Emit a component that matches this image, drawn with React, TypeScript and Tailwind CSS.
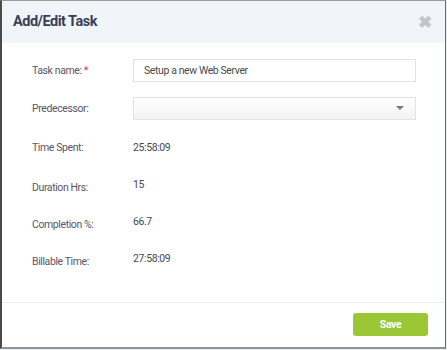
import React from 'react';

export default function App() {
  const rows: { label: string; value: string }[] = [
    { label: 'Time Spent:', value: '25:58:09' },
    { label: 'Duration Hrs:', value: '15' },
    { label: 'Completion %:', value: '66.7' },
    { label: 'Billable Time:', value: '27:58:09' },
  ];

  return (
    <div className="w-[447px] h-[350px] bg-[#e9eef3] font-['Roboto',sans-serif]">
      <div className="w-[446px] h-[349px] flex flex-col bg-white border-t border-t-[#9a9a9a] border-l-2 border-l-[#4a4a4a] border-r border-r-[#6a6a6a] border-b-2 border-b-[#8f9396]">
        {/* header */}
        <div className="h-[42px] flex items-center justify-between bg-[#f1f5f9] pl-[11px] pr-[13px]">
          <span className="text-[14.5px] font-bold text-[#3a3f58] tracking-[-0.5px]">Add/Edit Task</span>
          <span className="text-[#c2c6ca] text-[17px] font-bold leading-none">✖</span>
        </div>

        {/* body */}
        <div className="flex-1 pl-[30px] pr-[29px] pt-[16px] text-[10.5px] tracking-[-0.4px]">
          <div className="flex items-center h-[23px]">
            <span className="w-[101px] text-[#5b5566]">
              Task name: <span className="text-[#e0245e]">*</span>
            </span>
            <div className="flex-1 h-[23px] border border-[#dfe3e7] flex items-center px-[10px] text-[#4a4a4a]">
              Setup a new Web Server
            </div>
          </div>
          <div className="flex items-center h-[23px] mt-[15px]">
            <span className="w-[101px] text-[#5b5566]">Predecessor:</span>
            <div className="flex-1 h-[23px] border border-[#dfe3e7] bg-gradient-to-b from-white to-[#f3f3f3] flex items-center justify-end pr-[11px]">
              <svg width="8" height="5" viewBox="0 0 8 5">
                <path d="M0 0 L8 0 L4 4 Z" fill="#7a7a7a" />
              </svg>
            </div>
          </div>
          <div className="flex flex-col gap-[19px] mt-[20px]">
            {rows.map((r, i) => (
              <div key={r.label} className="flex h-[18px]">
                <span className={`w-[101px] text-[#5b5566] ${i === 0 ? '' : 'pt-[3px]'}`}>{r.label}</span>
                <span className="text-[#4a4a4a]">{r.value}</span>
              </div>
            ))}
          </div>
        </div>

        {/* footer */}
        <div className="h-[45px] border-t border-[#eceff1] flex items-center justify-end pr-[17px] pb-[1px]">
          <button className="w-[75px] h-[23px] rounded-[3px] bg-[#9bc736] text-white text-[10.5px] tracking-[-0.4px] font-bold">
            Save
          </button>
        </div>
      </div>
    </div>
  );
}
